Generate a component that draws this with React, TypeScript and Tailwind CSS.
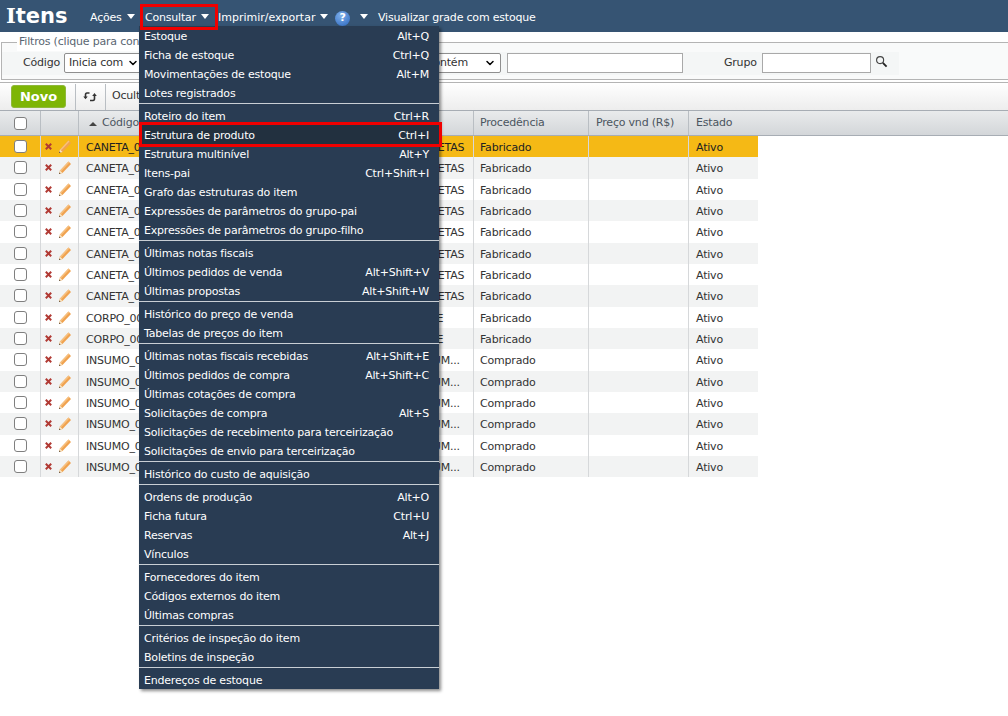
import { ChevronDown } from "lucide-react";

type Entry = { label: string; key?: string };

const menuGroups: Entry[][] = [
  [
    { label: "Estoque", key: "Alt+Q" },
    { label: "Ficha de estoque", key: "Ctrl+Q" },
    { label: "Movimentações de estoque", key: "Alt+M" },
    { label: "Lotes registrados" },
  ],
  [
    { label: "Roteiro do item", key: "Ctrl+R" },
    { label: "Estrutura de produto", key: "Ctrl+I" },
    { label: "Estrutura multinível", key: "Alt+Y" },
    { label: "Itens-pai", key: "Ctrl+Shift+I" },
    { label: "Grafo das estruturas do item" },
    { label: "Expressões de parâmetros do grupo-pai" },
    { label: "Expressões de parâmetros do grupo-filho" },
  ],
  [
    { label: "Últimas notas fiscais" },
    { label: "Últimos pedidos de venda", key: "Alt+Shift+V" },
    { label: "Últimas propostas", key: "Alt+Shift+W" },
  ],
  [{ label: "Histórico do preço de venda" }, { label: "Tabelas de preços do item" }],
  [
    { label: "Últimas notas fiscais recebidas", key: "Alt+Shift+E" },
    { label: "Últimos pedidos de compra", key: "Alt+Shift+C" },
    { label: "Últimas cotações de compra" },
    { label: "Solicitações de compra", key: "Alt+S" },
    { label: "Solicitações de recebimento para terceirização" },
    { label: "Solicitações de envio para terceirização" },
  ],
  [{ label: "Histórico do custo de aquisição" }],
  [
    { label: "Ordens de produção", key: "Alt+O" },
    { label: "Ficha futura", key: "Ctrl+U" },
    { label: "Reservas", key: "Alt+J" },
    { label: "Vínculos" },
  ],
  [
    { label: "Fornecedores do item" },
    { label: "Códigos externos do item" },
    { label: "Últimas compras" },
  ],
  [{ label: "Critérios de inspeção do item" }, { label: "Boletins de inspeção" }],
  [{ label: "Endereços de estoque" }],
];

const rows = [
  ...Array(8).fill(["CANETA_00", "CANETAS", "Fabricado"]),
  ...Array(2).fill(["CORPO_00", "BASE", "Fabricado"]),
  ...Array(6).fill(["INSUMO_00", "INSUM...", "Comprado"]),
] as string[][];

const Caret = () => (
  <span className="ml-[5px] inline-block h-0 w-0 translate-y-[-2px] border-x-[4.5px] border-t-[5px] border-x-transparent border-t-white" />
);

const Pencil = () => (
  <svg width="14" height="15" viewBox="0 0 14 15" className="shrink-0">
    <path d="M1 14 L2 10.5 L10.5 1.5 L13 4 L4.5 13 Z" fill="#f0a24f" />
    <path d="M2 10.5 L10.5 1.5 L11.5 2.5 L3 11.5 Z" fill="#f6c07f" />
    <path d="M1 14 L2 10.5 L4.5 13 Z" fill="#f7e3c2" />
    <path d="M1 14 L1.5 12.5 L2.5 13.5 Z" fill="#3a2a1a" />
  </svg>
);

const Cross = () => (
  <svg width="7" height="7" viewBox="0 0 7 7" className="shrink-0">
    <path d="M0.8 0.8 L6.2 6.2 M6.2 0.8 L0.8 6.2" stroke="#b13a34" strokeWidth="2" />
  </svg>
);

const Check = () => (
  <span className="block h-[13px] w-[13px] rounded-[3px] border border-[#7f7f7f] bg-white" />
);

const Select = ({ text, className }: { text: string; className: string }) => (
  <span
    className={`flex h-[20px] items-center justify-between overflow-hidden rounded-[2px] border border-[#8f8f8f] bg-white pl-[4px] pr-[4px] ${className}`}
  >
    <span className="whitespace-nowrap">{text}</span>
    <ChevronDown size={12} strokeWidth={3} className="shrink-0 text-black" />
  </span>
);

const App = () => {
  return (
    <div className="relative h-[716px] w-[1008px] overflow-hidden bg-white font-['DejaVu_Sans',sans-serif] text-[11px] tracking-[-0.2px] text-[#333]">
      <header className="flex h-[32px] items-center bg-[#365473] pl-[6px] text-white">
        <h1 className="w-[84px] text-[21px] font-bold tracking-normal">
          <span className="font-['DejaVu_Serif',serif]">I</span>tens
        </h1>
        <nav className="flex translate-y-[2px] items-center">
          <span className="flex w-[55px] items-center">
            Ações
            <Caret />
          </span>
          <span className="flex w-[73px] items-center">
            Consultar
            <Caret />
          </span>
          <span className="flex w-[117px] items-center tracking-normal">
            Imprimir/exportar
            <Caret />
          </span>
          <span className="flex h-[15px] w-[15px] items-center justify-center rounded-full bg-[radial-gradient(circle_at_40%_30%,#7fb0ea,#2a66bf)] text-[11px] font-bold">
            ?
          </span>
          <span className="ml-[5px] flex w-[23px] items-center">
            <Caret />
          </span>
          <span>Visualizar grade com estoque</span>
        </nav>
      </header>

      <fieldset className="ml-[1px] mt-[2px] h-[46px] border-y border-l border-[#b4b4b4] bg-[#f9fafa] pl-[21px]">
        <legend className="ml-[-6px] bg-white px-[2px] text-[#5a6672]">Filtros (clique para configurar)</legend>
        <div className="ml-[-21px] mt-[1px] flex h-[23px] w-[897px] items-center bg-[#f4f6f6] pl-[21px] text-[#333]">
          <span className="mr-[4px]">Código</span>
          <Select text="Inicia com" className="w-[80px]" />
          <span className="ml-[10px] mr-[6px] w-[347px]">
            <Select text="Contém" className="ml-[267px] w-[80px]" />
          </span>
          <span className="block h-[20px] w-[176px] border border-[#a9a9a9] bg-white" />
          <span className="ml-[41px] mr-[5px]">Grupo</span>
          <span className="block h-[20px] w-[109px] border border-[#a9a9a9] bg-white" />
          <svg width="13" height="13" viewBox="0 0 14 14" className="ml-[4px] mt-[-4px]" fill="none">
            <circle cx="5.5" cy="5.5" r="3.8" stroke="#444" strokeWidth="1.2" />
            <path d="M8.5 8.5 L12.5 12.5" stroke="#222" strokeWidth="2" />
          </svg>
        </div>
      </fieldset>

      <div className="mt-[2px] flex h-[28px] items-center border-t border-[#b4b4b4] bg-gradient-to-b from-white to-[#ededed] pl-[11px]">
        <span className="flex h-[23px] w-[55px] items-center justify-center rounded-[3px] border border-[#8fb83a] bg-[#7db505] text-[13px] font-bold tracking-normal text-white">
          Novo
        </span>
        <span className="ml-[9px] flex h-[26px] w-[31px] items-center justify-center border-x border-[#b9bec3]">
          <svg width="15" height="11" viewBox="0 0 15 11" fill="none" stroke="#333" strokeWidth="1.6">
            <path d="M6.5 2 H4 Q2.5 2 2.5 4 V7" />
            <path d="M0.3 5.5 L2.5 8.2 L4.7 5.5" fill="#333" stroke="none" />
            <path d="M7 9.5 H10 Q11.5 9.5 11.5 7.5 V4" />
            <path d="M9.2 5 L11.5 2 L13.8 5" fill="#333" stroke="none" />
          </svg>
        </span>
        <span className="ml-[6px]">Ocultar</span>
      </div>

      <div className="flex h-[26px] items-center border-y border-[#a7adb4] bg-gradient-to-b from-[#e9ebec] to-[#d3d6d9] text-[#4b5560]">
        <span className="flex h-full w-[41px] items-center justify-center border-r border-[#b9bec3]">
          <Check />
        </span>
        <span className="h-full w-[38px] border-r border-[#b9bec3]" />
        <span className="flex h-full w-[395px] items-center border-r border-[#b9bec3] pl-[10px] pt-[1px]">
          <span className="mr-[5px] h-0 w-0 border-x-[4px] border-b-[4px] border-x-transparent border-b-[#444]" />
          Código
        </span>
        <span className="flex h-full w-[115px] items-center border-r border-[#b9bec3] pl-[6px] pt-[1px]">Procedência</span>
        <span className="flex h-full w-[100px] items-center border-r border-[#b9bec3] pl-[7px] pt-[1px]">Preço vnd (R$)</span>
        <span className="pl-[7px] pt-[1px]">Estado</span>
      </div>

      {rows.map((row, i) => (
        <div
          key={i}
          className={`flex h-[21.33px] w-[758px] items-center ${
            i === 0 ? "bg-[#f5b915] text-[#222]" : i % 2 === 1 ? "bg-[#f2f3f3]" : "bg-white"
          }`}
        >
          <span className="flex h-full w-[41px] items-center justify-center border-r border-[#d6d8da]">
            <Check />
          </span>
          <span className="flex h-full w-[38px] items-center gap-[6px] border-r border-[#d6d8da] pl-[4px]">
            <Cross />
            <Pencil />
          </span>
          <span className="h-[21.33px] w-[325px] pl-[7px] leading-[23px]">{row[0]}</span>
          <span className="h-[21.33px] w-[70px] overflow-hidden whitespace-nowrap border-r border-[#d6d8da] pl-[11px] leading-[23px]">
            {row[1]}
          </span>
          <span className="h-[21.33px] w-[115px] border-r border-[#d6d8da] pl-[6px] leading-[23px]">{row[2]}</span>
          <span className="h-[21.33px] w-[100px] border-r border-[#d6d8da]" />
          <span className="h-[21.33px] pl-[7px] leading-[23px]">Ativo</span>
        </div>
      ))}

      <div className="absolute left-[139px] top-[26px] w-[300px] bg-[#293c53] text-white shadow-[2px_2px_3px_rgba(0,0,0,0.45)]">
        {menuGroups.map((group, g) => (
          <div key={g} className={g > 0 ? "mt-[1px] border-t border-[#c8ced4] pt-[2px]" : ""}>
            {group.map((entry) => (
              <div
                key={entry.label}
                className={`flex h-[19px] items-center justify-between pl-[5px] pr-[10px] pt-[3px] ${
                  entry.label === "Estrutura de produto" ? "bg-[#22303f]" : ""
                }`}
              >
                <span>{entry.label}</span>
                {entry.key && <span>{entry.key}</span>}
              </div>
            ))}
          </div>
        ))}
      </div>

      <div className="absolute left-[140px] top-[4px] h-[26px] w-[78px] border-[3px] border-[#f00000]" />
      <div className="absolute left-[139px] top-[122px] h-[25px] w-[303px] border-[3px] border-[#f00000]" />
    </div>
  );
};

export default App;
